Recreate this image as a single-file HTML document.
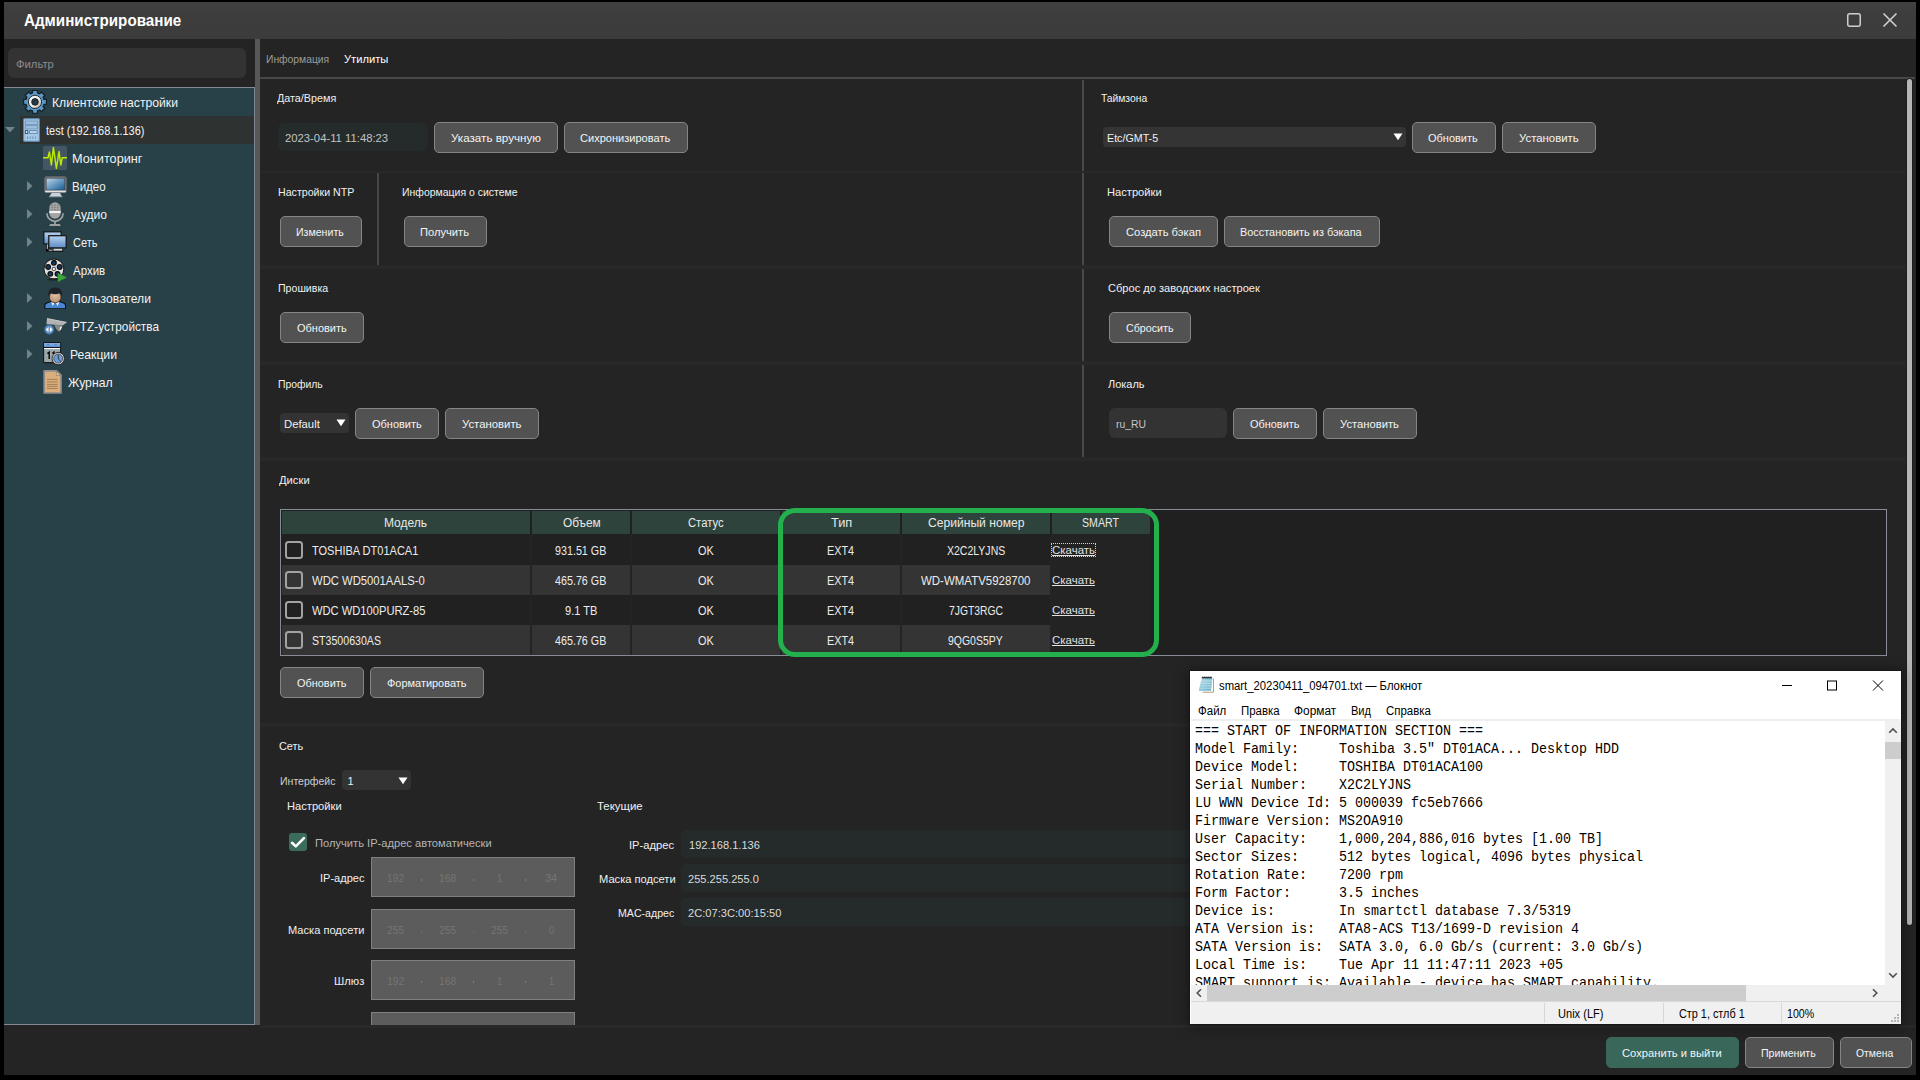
<!DOCTYPE html>
<html lang="ru"><head><meta charset="utf-8"><title>Администрирование</title>
<style>
html,body{margin:0;padding:0;background:#000;}
body{width:1920px;height:1080px;position:relative;overflow:hidden;font-family:"Liberation Sans",sans-serif;}
#app div,#app span,#app svg{position:absolute;}
#app span{white-space:pre;line-height:1;transform-origin:0 0;}
#app{position:absolute;left:0;top:0;width:1920px;height:1080px;overflow:hidden;}
</style></head><body><div id="app">
<div style="left:4px;top:2px;width:1912px;height:1073px;background:#242424;"></div>
<div style="left:4px;top:2px;width:1912px;height:37px;background:linear-gradient(#414141,#3d3d3d 30%,#3c3c3c);"></div>
<svg style="left:1844px;top:10px" width="60" height="20" viewBox="0 0 60 20"><rect x="3.75" y="3.75" width="12.5" height="12.5" rx="2" fill="none" stroke="#cfcfcf" stroke-width="1.5"/><path d="M39.5 3.5 L52.5 16.5 M52.5 3.5 L39.5 16.5" stroke="#cfcfcf" stroke-width="1.6" fill="none"/></svg>
<div style="left:8px;top:48px;width:238px;height:30px;background:#333333;border-radius:6px"></div>
<div style="left:4px;top:87px;width:251px;height:938px;background:#284148;border-top:1px solid #838a93;border-right:1px solid #7e858d;border-bottom:1px solid #838a93;box-sizing:border-box"></div>
<div style="left:20px;top:116px;width:234px;height:28px;background:#2e3230;"></div>
<div style="left:255px;top:39px;width:5px;height:986px;background:#585858;"></div>
<svg style="left:27px;top:181px" width="6" height="10"><path d="M0 0 L5.5 5 L0 10Z" fill="#6f8388"/></svg>
<svg style="left:27px;top:209px" width="6" height="10"><path d="M0 0 L5.5 5 L0 10Z" fill="#6f8388"/></svg>
<svg style="left:27px;top:237px" width="6" height="10"><path d="M0 0 L5.5 5 L0 10Z" fill="#6f8388"/></svg>
<svg style="left:27px;top:293px" width="6" height="10"><path d="M0 0 L5.5 5 L0 10Z" fill="#6f8388"/></svg>
<svg style="left:27px;top:321px" width="6" height="10"><path d="M0 0 L5.5 5 L0 10Z" fill="#6f8388"/></svg>
<svg style="left:27px;top:349px" width="6" height="10"><path d="M0 0 L5.5 5 L0 10Z" fill="#6f8388"/></svg>
<svg style="left:5px;top:127px" width="10" height="6"><path d="M0 0 L10 0 L5 5.5Z" fill="#6f8388"/></svg>
<div style="left:260px;top:77px;width:1655px;height:2px;background:#484848;"></div>
<div style="left:1907px;top:79px;width:5px;height:846px;background:#b6b6b6;border-radius:3px;box-shadow:0 0 0 1px #1e1e1e"></div>
<div style="left:260px;top:171px;width:1646px;height:2px;background:#282828;"></div>
<div style="left:260px;top:265px;width:1646px;height:4px;background:#282828;"></div>
<div style="left:260px;top:361px;width:1646px;height:4px;background:#282828;"></div>
<div style="left:260px;top:457px;width:1646px;height:4px;background:#282828;"></div>
<div style="left:260px;top:723px;width:1646px;height:4px;background:#282828;"></div>
<div style="left:1082px;top:80px;width:2px;height:91px;background:#494949;"></div>
<div style="left:1082px;top:173px;width:2px;height:92px;background:#494949;"></div>
<div style="left:1082px;top:269px;width:2px;height:92px;background:#494949;"></div>
<div style="left:1082px;top:365px;width:2px;height:92px;background:#494949;"></div>
<div style="left:377px;top:173px;width:2px;height:92px;background:#454545;"></div>
<div style="left:278px;top:123px;width:150px;height:28px;background:#252a2a;border-radius:6px"></div>
<div style="left:434px;top:122px;width:124px;height:31px;background:#525252;border:1px solid #858585;border-radius:5px;box-sizing:border-box"></div>
<div style="left:564px;top:122px;width:124px;height:31px;background:#525252;border:1px solid #858585;border-radius:5px;box-sizing:border-box"></div>
<div style="left:1103px;top:127px;width:303px;height:20px;background:#343434;border-radius:4px"></div>
<svg style="left:1393px;top:133px" width="10" height="8"><path d="M0.5 0.5 L9.5 0.5 L5 7.2Z" fill="#ffffff"/></svg>
<div style="left:1412px;top:122px;width:84px;height:31px;background:#525252;border:1px solid #858585;border-radius:5px;box-sizing:border-box"></div>
<div style="left:1502px;top:122px;width:94px;height:31px;background:#525252;border:1px solid #858585;border-radius:5px;box-sizing:border-box"></div>
<div style="left:280px;top:216px;width:82px;height:31px;background:#525252;border:1px solid #858585;border-radius:5px;box-sizing:border-box"></div>
<div style="left:404px;top:216px;width:83px;height:31px;background:#525252;border:1px solid #858585;border-radius:5px;box-sizing:border-box"></div>
<div style="left:1109px;top:216px;width:109px;height:31px;background:#525252;border:1px solid #858585;border-radius:5px;box-sizing:border-box"></div>
<div style="left:1224px;top:216px;width:156px;height:31px;background:#525252;border:1px solid #858585;border-radius:5px;box-sizing:border-box"></div>
<div style="left:280px;top:312px;width:84px;height:31px;background:#525252;border:1px solid #858585;border-radius:5px;box-sizing:border-box"></div>
<div style="left:1109px;top:312px;width:82px;height:31px;background:#525252;border:1px solid #858585;border-radius:5px;box-sizing:border-box"></div>
<div style="left:280px;top:413px;width:69px;height:20px;background:#333333;border-radius:4px"></div>
<svg style="left:336px;top:419px" width="10" height="8"><path d="M0.5 0.5 L9.5 0.5 L5 7.2Z" fill="#ffffff"/></svg>
<div style="left:355px;top:408px;width:84px;height:31px;background:#525252;border:1px solid #858585;border-radius:5px;box-sizing:border-box"></div>
<div style="left:445px;top:408px;width:94px;height:31px;background:#525252;border:1px solid #858585;border-radius:5px;box-sizing:border-box"></div>
<div style="left:1109px;top:408px;width:118px;height:30px;background:#333333;border-radius:6px"></div>
<div style="left:1233px;top:408px;width:84px;height:31px;background:#525252;border:1px solid #858585;border-radius:5px;box-sizing:border-box"></div>
<div style="left:1323px;top:408px;width:94px;height:31px;background:#525252;border:1px solid #858585;border-radius:5px;box-sizing:border-box"></div>
<div style="left:280px;top:509px;width:1607px;height:147px;background:#202020;border:1px solid #878b96;box-sizing:border-box"></div>
<div style="left:282px;top:511px;width:248px;height:23px;background:#2e433c;"></div>
<div style="left:532px;top:511px;width:98px;height:23px;background:#2e433c;"></div>
<div style="left:632px;top:511px;width:148px;height:23px;background:#2e433c;"></div>
<div style="left:782px;top:511px;width:118px;height:23px;background:#2e433c;"></div>
<div style="left:902px;top:511px;width:148px;height:23px;background:#2e433c;"></div>
<div style="left:1052px;top:511px;width:98px;height:23px;background:#2e433c;"></div>
<div style="left:282px;top:534px;width:248px;height:31px;background:#212121;"></div>
<div style="left:532px;top:534px;width:98px;height:31px;background:#212121;"></div>
<div style="left:632px;top:534px;width:148px;height:31px;background:#212121;"></div>
<div style="left:782px;top:534px;width:118px;height:31px;background:#212121;"></div>
<div style="left:902px;top:534px;width:148px;height:31px;background:#212121;"></div>
<div style="left:282px;top:565px;width:248px;height:30px;background:#343434;"></div>
<div style="left:532px;top:565px;width:98px;height:30px;background:#343434;"></div>
<div style="left:632px;top:565px;width:148px;height:30px;background:#343434;"></div>
<div style="left:782px;top:565px;width:118px;height:30px;background:#343434;"></div>
<div style="left:902px;top:565px;width:148px;height:30px;background:#343434;"></div>
<div style="left:282px;top:595px;width:248px;height:30px;background:#212121;"></div>
<div style="left:532px;top:595px;width:98px;height:30px;background:#212121;"></div>
<div style="left:632px;top:595px;width:148px;height:30px;background:#212121;"></div>
<div style="left:782px;top:595px;width:118px;height:30px;background:#212121;"></div>
<div style="left:902px;top:595px;width:148px;height:30px;background:#212121;"></div>
<div style="left:282px;top:625px;width:248px;height:30px;background:#343434;"></div>
<div style="left:532px;top:625px;width:98px;height:30px;background:#343434;"></div>
<div style="left:632px;top:625px;width:148px;height:30px;background:#343434;"></div>
<div style="left:782px;top:625px;width:118px;height:30px;background:#343434;"></div>
<div style="left:902px;top:625px;width:148px;height:30px;background:#343434;"></div>
<div style="left:1052px;top:534px;width:98px;height:121px;background:#232323;"></div>
<div style="left:530px;top:534px;width:2px;height:121px;background:#242424;"></div>
<div style="left:630px;top:534px;width:2px;height:121px;background:#242424;"></div>
<div style="left:780px;top:534px;width:2px;height:121px;background:#242424;"></div>
<div style="left:900px;top:534px;width:2px;height:121px;background:#242424;"></div>
<div style="left:1050px;top:534px;width:2px;height:121px;background:#242424;"></div>
<div style="left:285px;top:541px;width:18px;height:18px;box-sizing:border-box;border:2px solid #a2a2a2;border-radius:3.5px"></div>
<div style="left:285px;top:571px;width:18px;height:18px;box-sizing:border-box;border:2px solid #a2a2a2;border-radius:3.5px"></div>
<div style="left:285px;top:601px;width:18px;height:18px;box-sizing:border-box;border:2px solid #a2a2a2;border-radius:3.5px"></div>
<div style="left:285px;top:631px;width:18px;height:18px;box-sizing:border-box;border:2px solid #a2a2a2;border-radius:3.5px"></div>
<div style="left:1051px;top:543px;width:45px;height:14px;box-sizing:border-box;border:1px dotted #d0d0d0"></div>
<div style="left:778px;top:507.5px;width:381px;height:149px;box-sizing:border-box;border:5px solid #22b14c;border-radius:17px"></div>
<div style="left:280px;top:667px;width:84px;height:31px;background:#525252;border:1px solid #858585;border-radius:5px;box-sizing:border-box"></div>
<div style="left:370px;top:667px;width:114px;height:31px;background:#525252;border:1px solid #858585;border-radius:5px;box-sizing:border-box"></div>
<div style="left:342px;top:770px;width:69px;height:20px;background:#333333;border-radius:4px"></div>
<svg style="left:398px;top:776.5px" width="10" height="8"><path d="M0.5 0.5 L9.5 0.5 L5 7.2Z" fill="#ffffff"/></svg>
<div style="left:289px;top:833px;width:18px;height:18px;background:#3b6b5a;border-radius:3px"></div>
<svg style="left:289px;top:833px" width="18" height="18" viewBox="0 0 18 18"><path d="M3 9.8 L6.8 13.4 L14.9 5.1" fill="none" stroke="#ffffff" stroke-width="2.6" stroke-linecap="round" stroke-linejoin="round"/></svg>
<div style="left:371px;top:857px;width:204px;height:40px;background:#5c5c5c;border:1px solid #808080;box-sizing:border-box"></div>
<div style="left:420.5px;top:878.9px;width:1.6px;height:1.8px;background:#7c7c7c;"></div>
<div style="left:472.5px;top:878.9px;width:1.6px;height:1.8px;background:#7c7c7c;"></div>
<div style="left:524.5px;top:878.9px;width:1.6px;height:1.8px;background:#7c7c7c;"></div>
<div style="left:371px;top:909px;width:204px;height:40px;background:#5c5c5c;border:1px solid #808080;box-sizing:border-box"></div>
<div style="left:420.5px;top:930.65px;width:1.6px;height:1.8px;background:#7c7c7c;"></div>
<div style="left:472.5px;top:930.65px;width:1.6px;height:1.8px;background:#7c7c7c;"></div>
<div style="left:524.5px;top:930.65px;width:1.6px;height:1.8px;background:#7c7c7c;"></div>
<div style="left:371px;top:960px;width:204px;height:40px;background:#5c5c5c;border:1px solid #808080;box-sizing:border-box"></div>
<div style="left:420.5px;top:981.4px;width:1.6px;height:1.8px;background:#7c7c7c;"></div>
<div style="left:472.5px;top:981.4px;width:1.6px;height:1.8px;background:#7c7c7c;"></div>
<div style="left:524.5px;top:981.4px;width:1.6px;height:1.8px;background:#7c7c7c;"></div>
<div style="left:371px;top:1012px;width:204px;height:13px;background:#5c5c5c;border:1px solid #808080;border-bottom:none;box-sizing:border-box"></div>
<div style="left:681px;top:830px;width:520px;height:28px;background:#252a2a;border-radius:5px 0 0 5px"></div>
<div style="left:681px;top:864px;width:520px;height:28px;background:#252a2a;border-radius:5px 0 0 5px"></div>
<div style="left:681px;top:898px;width:520px;height:28px;background:#252a2a;border-radius:5px 0 0 5px"></div>
<div style="left:4px;top:1025px;width:1912px;height:50px;background:#242424;"></div>
<div style="left:260px;top:1025px;width:1656px;height:3px;background:#292929;"></div>
<div style="left:1606px;top:1037px;width:133px;height:31px;background:#39685a;border:1px solid #39685a;border-radius:5px;box-sizing:border-box"></div>
<div style="left:1745px;top:1037px;width:89px;height:31px;background:#525252;border:1px solid #858585;border-radius:5px;box-sizing:border-box"></div>
<div style="left:1840px;top:1037px;width:72px;height:31px;background:#525252;border:1px solid #858585;border-radius:5px;box-sizing:border-box"></div>
<div style="left:1190px;top:671px;width:711px;height:353px;background:#ffffff;box-shadow:0 0 0 1px rgba(0,0,0,0.2),0 1px 12px 2px rgba(0,0,0,0.36)"></div>
<svg style="left:1198px;top:676px" width="17" height="18" viewBox="0 0 17 18"><defs><linearGradient id="npg" x1="0" y1="0" x2="1" y2="1"><stop offset="0" stop-color="#b4dde8"/><stop offset="1" stop-color="#64aecb"/></linearGradient></defs><path d="M4.4 2.4 H15.3 V16 H4.6Z" fill="#ffffff"/><path d="M15.5 2.6 V16.2 H4.6" fill="none" stroke="#a8946a" stroke-width="0.9"/><path d="M3.7 2 H14.5 L13 14.8 H0.8Z" fill="url(#npg)"/><path d="M3.2 5 H14 M2.9 7.4 H13.7 M2.5 9.8 H13.4 M2.2 12.2 H13.1" stroke="#c6e6ef" stroke-width="0.8"/><path d="M3.9 2.2 L4.9 1 L5.9 2.2 L6.9 1 L7.9 2.2 L8.9 1 L9.9 2.2 L10.9 1 L11.9 2.2 L12.9 1 L13.9 2.2" fill="none" stroke="#2c3438" stroke-width="1.1"/></svg>
<svg style="left:1775px;top:676px" width="120" height="20" viewBox="0 0 120 20"><path d="M7 9.5 H17" stroke="#000" stroke-width="1"/><rect x="52.5" y="5" width="9" height="9" fill="none" stroke="#000" stroke-width="1"/><path d="M98 4.5 L108 14.5 M108 4.5 L98 14.5" stroke="#000" stroke-width="1"/></svg>
<div style="left:1191px;top:719px;width:709px;height:2px;background:#eeeeee;"></div>
<div style="left:1191px;top:721px;width:694px;height:264px;overflow:hidden;background:#fff"><div style="left:-1191px;top:-721px;width:1920px;height:1080px"><span style="left:1194.6px;top:724.27px;font-size:14px;font-family:'Liberation Mono',monospace;color:#000;transform:scaleX(0.9524)">=== START OF INFORMATION SECTION ===</span><span style="left:1194.6px;top:742.27px;font-size:14px;font-family:'Liberation Mono',monospace;color:#000;transform:scaleX(0.9524)">Model Family:     Toshiba 3.5&quot; DT01ACA... Desktop HDD</span><span style="left:1194.6px;top:760.27px;font-size:14px;font-family:'Liberation Mono',monospace;color:#000;transform:scaleX(0.9524)">Device Model:     TOSHIBA DT01ACA100</span><span style="left:1194.6px;top:778.27px;font-size:14px;font-family:'Liberation Mono',monospace;color:#000;transform:scaleX(0.9524)">Serial Number:    X2C2LYJNS</span><span style="left:1194.6px;top:796.27px;font-size:14px;font-family:'Liberation Mono',monospace;color:#000;transform:scaleX(0.9524)">LU WWN Device Id: 5 000039 fc5eb7666</span><span style="left:1194.6px;top:814.27px;font-size:14px;font-family:'Liberation Mono',monospace;color:#000;transform:scaleX(0.9524)">Firmware Version: MS2OA910</span><span style="left:1194.6px;top:832.27px;font-size:14px;font-family:'Liberation Mono',monospace;color:#000;transform:scaleX(0.9524)">User Capacity:    1,000,204,886,016 bytes [1.00 TB]</span><span style="left:1194.6px;top:850.27px;font-size:14px;font-family:'Liberation Mono',monospace;color:#000;transform:scaleX(0.9524)">Sector Sizes:     512 bytes logical, 4096 bytes physical</span><span style="left:1194.6px;top:868.27px;font-size:14px;font-family:'Liberation Mono',monospace;color:#000;transform:scaleX(0.9524)">Rotation Rate:    7200 rpm</span><span style="left:1194.6px;top:886.27px;font-size:14px;font-family:'Liberation Mono',monospace;color:#000;transform:scaleX(0.9524)">Form Factor:      3.5 inches</span><span style="left:1194.6px;top:904.27px;font-size:14px;font-family:'Liberation Mono',monospace;color:#000;transform:scaleX(0.9524)">Device is:        In smartctl database 7.3/5319</span><span style="left:1194.6px;top:922.27px;font-size:14px;font-family:'Liberation Mono',monospace;color:#000;transform:scaleX(0.9524)">ATA Version is:   ATA8-ACS T13/1699-D revision 4</span><span style="left:1194.6px;top:940.27px;font-size:14px;font-family:'Liberation Mono',monospace;color:#000;transform:scaleX(0.9524)">SATA Version is:  SATA 3.0, 6.0 Gb/s (current: 3.0 Gb/s)</span><span style="left:1194.6px;top:958.27px;font-size:14px;font-family:'Liberation Mono',monospace;color:#000;transform:scaleX(0.9524)">Local Time is:    Tue Apr 11 11:47:11 2023 +05</span><span style="left:1194.6px;top:976.27px;font-size:14px;font-family:'Liberation Mono',monospace;color:#000;transform:scaleX(0.9524)">SMART support is: Available - device has SMART capability.</span></div></div>
<div style="left:1885px;top:721px;width:16px;height:264px;background:#f0f0f0;"></div>
<div style="left:1885px;top:742px;width:16px;height:17px;background:#cdcdcd;"></div>
<svg style="left:1885px;top:721px" width="16" height="264" viewBox="0 0 16 264"><path d="M4.2 11.8 L8 8 L11.8 11.8" fill="none" stroke="#505050" stroke-width="1.6"/><path d="M4.2 252.2 L8 256 L11.8 252.2" fill="none" stroke="#505050" stroke-width="1.6"/></svg>
<div style="left:1191px;top:985px;width:710px;height:16px;background:#f0f0f0;"></div>
<div style="left:1207px;top:985px;width:539px;height:16px;background:#cdcdcd;"></div>
<svg style="left:1191px;top:985px" width="694" height="16" viewBox="0 0 694 16"><path d="M10 4.2 L6.2 8 L10 11.8" fill="none" stroke="#505050" stroke-width="1.6"/><path d="M682 4.2 L685.8 8 L682 11.8" fill="none" stroke="#505050" stroke-width="1.6"/></svg>
<div style="left:1191px;top:1001px;width:710px;height:23px;background:#f0f0f0;border-top:1px solid #d9d9d9;box-sizing:border-box"></div>
<div style="left:1544px;top:1003px;width:1px;height:20px;background:#d7d7d7;"></div>
<div style="left:1663px;top:1003px;width:1px;height:20px;background:#d7d7d7;"></div>
<div style="left:1781px;top:1003px;width:1px;height:20px;background:#d7d7d7;"></div>
<svg style="left:1890px;top:1013px" width="10" height="10" viewBox="0 0 10 10"><g fill="#b4b4b4"><rect x="7" y="1" width="2" height="2"/><rect x="4" y="4" width="2" height="2"/><rect x="7" y="4" width="2" height="2"/><rect x="1" y="7" width="2" height="2"/><rect x="4" y="7" width="2" height="2"/><rect x="7" y="7" width="2" height="2"/></g></svg>
<svg style="left:23px;top:90px" width="24" height="24" viewBox="0 0 24 24"><defs><linearGradient id="gg" x1="0" y1="0" x2="1" y2="1"><stop offset="0" stop-color="#ffffff"/><stop offset="0.6" stop-color="#e8e8e8"/><stop offset="1" stop-color="#9a9a9a"/></linearGradient></defs><path d="M9.52 2.94 L9.50 0.47 L14.50 0.47 L14.48 2.94 L16.58 3.81 L18.32 2.05 L21.85 5.58 L20.09 7.32 L20.96 9.42 L23.43 9.40 L23.43 14.40 L20.96 14.38 L20.09 16.48 L21.85 18.22 L18.32 21.75 L16.58 19.99 L14.48 20.86 L14.50 23.33 L9.50 23.33 L9.52 20.86 L7.42 19.99 L5.68 21.75 L2.15 18.22 L3.91 16.48 L3.04 14.38 L0.57 14.40 L0.57 9.40 L3.04 9.42 L3.91 7.32 L2.15 5.58 L5.68 2.05 L7.42 3.81Z" fill="#5d99c8" stroke="#15222a" stroke-width="1.3" stroke-linejoin="round"/><circle cx="12" cy="11.9" r="6.6" fill="url(#gg)" stroke="#1b1b1b" stroke-width="0.9"/><circle cx="12" cy="11.9" r="3.3" fill="#253a42" stroke="#1b1b1b" stroke-width="0.9"/></svg>
<svg style="left:23px;top:118px" width="17" height="24" viewBox="0 0 17 24"><rect x="0.6" y="0.6" width="15.8" height="22.8" rx="1" fill="#a6c9e8" stroke="#5a86ad" stroke-width="1.2"/><rect x="2.6" y="3" width="11.8" height="3.6" fill="#9dbfdf" stroke="#6f93b5" stroke-width="0.8"/><rect x="2.6" y="7.4" width="11.8" height="3.6" fill="#9dbfdf" stroke="#6f93b5" stroke-width="0.8"/><rect x="6.6" y="12.6" width="7.6" height="3" fill="#b5d2ec" stroke="#5f86aa" stroke-width="0.8"/><rect x="2.4" y="12.6" width="2.4" height="3" fill="#dfeefa" stroke="#2f4f70" stroke-width="0.9"/><path d="M4.5 18.4 V21 M7.2 18.4 V21 M9.9 18.4 V21 M12.6 18.4 V21" stroke="#6f93b5" stroke-width="1"/></svg>
<svg style="left:43px;top:146px" width="24" height="24" viewBox="0 0 24 24"><rect x="0" y="0" width="24" height="24" rx="1.5" fill="#445664"/><path d="M0 11.8 H5 L6.4 6 L8.4 19 L10.4 1.5 L13.4 22.5 L16 5.5 L17.8 19 L19.2 11.8 H24" fill="none" stroke="#b9ea00" stroke-width="1.5" stroke-linejoin="round"/></svg>
<svg style="left:44px;top:175.6px" width="23" height="22" viewBox="0 0 23 22"><defs><linearGradient id="mg" x1="0" y1="0" x2="1" y2="1"><stop offset="0" stop-color="#c3d6e6"/><stop offset="0.45" stop-color="#6fa0c6"/><stop offset="1" stop-color="#185a92"/></linearGradient></defs><rect x="0.7" y="0.7" width="21.6" height="15.8" rx="1.6" fill="#757575" stroke="#666666" stroke-width="1"/><rect x="2.2" y="2.2" width="18.6" height="11.8" fill="url(#mg)" stroke="#33414d" stroke-width="0.5"/><rect x="1.2" y="14.6" width="20.6" height="1.7" fill="#e4e4e4"/><path d="M7.6 17 H16 L18 20.6 H5.4Z" fill="#c9d2da"/><path d="M5 20.2 H18.4 V21.2 H5Z" fill="#9aa3aa"/></svg>
<svg style="left:46px;top:201.8px" width="18" height="24.4" viewBox="0 0 18 24.4"><path d="M0.9 11.2 A8.1 8.1 0 0 0 17.1 11.2" fill="none" stroke="#a0a0a0" stroke-width="1.7"/><rect x="3.3" y="0.3" width="11.4" height="16.4" rx="5.6" fill="#a3a3a3"/><rect x="3.3" y="9" width="11.4" height="2.1" fill="#f4f4f4"/><g fill="#7f7f7f"><rect x="5.4" y="2.6" width="1.5" height="1.2"/><rect x="8.2" y="2.6" width="1.5" height="1.2"/><rect x="11" y="2.6" width="1.5" height="1.2"/><rect x="5.4" y="4.9" width="1.5" height="1.2"/><rect x="8.2" y="4.9" width="1.5" height="1.2"/><rect x="11" y="4.9" width="1.5" height="1.2"/><rect x="5.4" y="7.1" width="1.5" height="1.2"/><rect x="8.2" y="7.1" width="1.5" height="1.2"/><rect x="11" y="7.1" width="1.5" height="1.2"/></g><rect x="8.1" y="19.2" width="1.8" height="3.2" fill="#a0a0a0"/><path d="M4.2 22 H13.8 L14.8 24 H3.2Z" fill="#a0a0a0"/></svg>
<svg style="left:43px;top:231px" width="24" height="22" viewBox="0 0 24 22"><defs><linearGradient id="ng" x1="0" y1="0" x2="0" y2="1"><stop offset="0" stop-color="#b9d3f2"/><stop offset="1" stop-color="#5a8bc6"/></linearGradient></defs><rect x="0.8" y="0.8" width="17.4" height="12.2" fill="url(#ng)" stroke="#1a1a1a" stroke-width="1.3"/><path d="M4.4 13.4 V19.2 H9.6" fill="none" stroke="#151515" stroke-width="2.4"/><path d="M4.4 13.4 V19.2 H9.6" fill="none" stroke="#d8d8d8" stroke-width="0.9"/><circle cx="4.2" cy="19.4" r="1.6" fill="#111"/><rect x="5.8" y="4.7" width="17.4" height="12.2" fill="url(#ng)" stroke="#1a1a1a" stroke-width="1.3"/><rect x="10.6" y="17.8" width="8.4" height="2" fill="#d6d6d6"/><path d="M9 20.3 H20.5" stroke="#151515" stroke-width="1"/></svg>
<svg style="left:43px;top:257.9px" width="24" height="24.4" viewBox="0 0 24 24.4"><ellipse cx="10.9" cy="21.6" rx="7" ry="0.8" fill="#1a2226"/><circle cx="10.9" cy="10.9" r="10" fill="#dedede" stroke="#202020" stroke-width="1.1"/><circle cx="10.90" cy="4.80" r="2.3" fill="#173a63" stroke="#101010" stroke-width="1.3"/><circle cx="16.70" cy="9.01" r="2.3" fill="#173a63" stroke="#101010" stroke-width="1.3"/><circle cx="14.49" cy="15.84" r="2.3" fill="#173a63" stroke="#101010" stroke-width="1.3"/><circle cx="7.31" cy="15.84" r="2.3" fill="#173a63" stroke="#101010" stroke-width="1.3"/><circle cx="5.10" cy="9.01" r="2.3" fill="#173a63" stroke="#101010" stroke-width="1.3"/><rect x="9.4" y="9.4" width="3" height="3" rx="0.8" fill="#fff" stroke="#222" stroke-width="0.9"/><path d="M15 15.2 L23.6 19.5 L15 23.8Z" fill="#3aa73a" stroke="#2f962f" stroke-width="0.5"/></svg>
<svg style="left:43.7px;top:286.8px" width="22.4" height="22.6" viewBox="0 0 22.4 22.6"><defs><radialGradient id="ug" cx="0.5" cy="0.35" r="0.7"><stop offset="0" stop-color="#e2c2a4"/><stop offset="1" stop-color="#b48a68"/></radialGradient></defs><path d="M0.8 21.8 V18.4 Q0.8 16.2 4 15.5 L8 14.2 H14.4 L18.4 15.5 Q21.6 16.2 21.6 18.4 V21.8Z" fill="#4a86d2" stroke="#0c0c0c" stroke-width="1.1" stroke-linejoin="round"/><path d="M7.2 14.8 L8.8 19 L10.6 15.4Z M15.2 14.8 L13.6 19 L11.8 15.4Z" fill="#ffffff"/><circle cx="11.2" cy="10" r="5.9" fill="url(#ug)" stroke="#2a2420" stroke-width="0.7"/><path d="M4.4 9.6 Q3.2 0.6 11.2 0.5 Q19.2 0.6 18 9.6 Q17.4 7 15.6 6.3 Q11.2 8 6.8 6.3 Q5 7 4.4 9.6Z" fill="#1d2128"/></svg>
<svg style="left:44.1px;top:317.8px" width="23.4" height="17" viewBox="0 0 23.4 17"><path d="M3.0 0.6 L22.7 4.4 L19.1 7.3 L2.5 6.2Z" fill="#b2b2b2"/><path d="M3.0 0.6 L22.7 4.4" stroke="#d4d4d4" stroke-width="0.9"/><path d="M10.2 6.8 L18.8 7.6 L15.9 13.5 L14.2 13.3 L11.9 10.6Z" fill="#8a8a8a"/><path d="M16.3 8.8 L18 8.6 L16.7 11.9 L15.4 11.7Z" fill="#f2f2f2"/><circle cx="5.2" cy="11.6" r="4.6" fill="#5c90c8" stroke="#3d6c9e" stroke-width="0.7"/><path d="M4.5 9 L4.5 14.2 L1.8 11.6Z M5.9 9 L5.9 14.2 L8.6 11.6Z" fill="#ffffff"/></svg>
<svg style="left:43px;top:342px" width="22" height="23.4" viewBox="0 0 22 23.4"><defs><linearGradient id="cg" x1="0" y1="0" x2="0" y2="1"><stop offset="0" stop-color="#8ab4e6"/><stop offset="1" stop-color="#5b8fd0"/></linearGradient></defs><rect x="0.6" y="0.6" width="17" height="20" rx="0.8" fill="#9ba7a8" stroke="#15191b" stroke-width="1.1"/><rect x="1.1" y="1.1" width="16" height="4" fill="url(#cg)"/><path d="M4 2.6 H6.4 M11.4 2.6 H13.8" stroke="#4d7fc0" stroke-width="0.9"/><rect x="0.6" y="5" width="17" height="1" fill="#15191b"/><rect x="1.1" y="6" width="16" height="1.1" fill="#fafafa"/><path d="M4.4 11.6 L6.2 10.2 V17" fill="none" stroke="#0a0a0a" stroke-width="1.5"/><path d="M9.4 11.4 L10.8 10.2 V12" fill="none" stroke="#0a0a0a" stroke-width="1.4"/><circle cx="15.2" cy="16.6" r="6.2" fill="#d9d9d9" stroke="#1c1c1c" stroke-width="0.9"/><circle cx="15.2" cy="16.6" r="4.5" fill="#6c9cd6" stroke="#2c2c2c" stroke-width="0.7"/><path d="M15.3 13 V17 L17.8 19.4" fill="none" stroke="#20303c" stroke-width="0.9"/></svg>
<svg style="left:43px;top:370px" width="19" height="24" viewBox="0 0 19 24"><path d="M1.2 0.9 H13.6 L18 5.2 V23 H1.2Z" fill="#dcae7b" stroke="#8e8e8e" stroke-width="1.7" stroke-linejoin="round"/><path d="M13.4 1.4 V5.4 H17.6Z" fill="#f0d2ac" stroke="#7a6a55" stroke-width="0.6"/><path d="M4 9.4 H14.6 M4 11.9 H14.6 M4 14.4 H14.6 M4 16.4 H14.6 M4 18.5 H14.6" stroke="#9b7a52" stroke-width="0.9"/></svg>
<span style="left:24.00px;top:13.00px;font-size:16px;color:#ffffff;font-weight:700;transform:scaleX(0.9484);">Администрирование</span>
<span style="left:15.50px;top:59.00px;font-size:11px;color:#8c8c8c;transform:scaleX(1.0248);">Фильтр</span>
<span style="left:52.31px;top:96.00px;font-size:13px;color:#f2f2f2;transform:scaleX(0.9366);">Клиентские настройки</span>
<span style="left:46.25px;top:124.00px;font-size:13px;color:#f2f2f2;transform:scaleX(0.8468);">test (192.168.1.136)</span>
<span style="left:72.27px;top:152.00px;font-size:13px;color:#f2f2f2;transform:scaleX(0.9775);">Мониторинг</span>
<span style="left:72.37px;top:180.00px;font-size:13px;color:#f2f2f2;transform:scaleX(0.8844);">Видео</span>
<span style="left:73.25px;top:208.00px;font-size:13px;color:#f2f2f2;transform:scaleX(0.9262);">Аудио</span>
<span style="left:73.25px;top:236.00px;font-size:13px;color:#f2f2f2;transform:scaleX(0.8493);">Сеть</span>
<span style="left:73.25px;top:264.00px;font-size:13px;color:#f2f2f2;transform:scaleX(0.8832);">Архив</span>
<span style="left:72.32px;top:292.00px;font-size:13px;color:#f2f2f2;transform:scaleX(0.9302);">Пользователи</span>
<span style="left:72.34px;top:320.00px;font-size:13px;color:#f2f2f2;transform:scaleX(0.9072);">PTZ-устройства</span>
<span style="left:70.32px;top:348.00px;font-size:13px;color:#f2f2f2;transform:scaleX(0.9345);">Реакции</span>
<span style="left:68.00px;top:376.00px;font-size:13px;color:#f2f2f2;transform:scaleX(0.9392);">Журнал</span>
<span style="left:266.25px;top:54.00px;font-size:11px;color:#9c9c9c;transform:scaleX(0.9385);">Информация</span>
<span style="left:343.75px;top:54.00px;font-size:11px;color:#ffffff;transform:scaleX(1.0166);">Утилиты</span>
<span style="left:277.00px;top:93.00px;font-size:11px;color:#f0f0f0;transform:scaleX(0.9785);">Дата/Время</span>
<span style="left:285.00px;top:133.00px;font-size:11px;color:#c4c4c4;transform:scaleX(1.0260);">2023-04-11 11:48:23</span>
<span style="left:450.75px;top:133.00px;font-size:11px;color:#f4f4f4;transform:scaleX(1.0568);">Указать вручную</span>
<span style="left:580.00px;top:133.00px;font-size:11px;color:#f4f4f4;transform:scaleX(1.0044);">Сихронизировать</span>
<span style="left:1101.25px;top:93.00px;font-size:11px;color:#f0f0f0;transform:scaleX(0.9393);">Таймзона</span>
<span style="left:1107.00px;top:133.00px;font-size:11px;color:#f0f0f0;transform:scaleX(0.9725);">Etc/GMT-5</span>
<span style="left:1428.25px;top:133.00px;font-size:11px;color:#f4f4f4;transform:scaleX(0.9985);">Обновить</span>
<span style="left:1518.50px;top:133.00px;font-size:11px;color:#f4f4f4;transform:scaleX(1.0344);">Установить</span>
<span style="left:278.25px;top:187.00px;font-size:11px;color:#f0f0f0;transform:scaleX(0.9662);">Настройки NTP</span>
<span style="left:296.25px;top:227.00px;font-size:11px;color:#f4f4f4;transform:scaleX(0.9622);">Изменить</span>
<span style="left:402.00px;top:187.00px;font-size:11px;color:#f0f0f0;transform:scaleX(0.9520);">Информация о системе</span>
<span style="left:420.00px;top:227.00px;font-size:11px;color:#f4f4f4;transform:scaleX(1.0131);">Получить</span>
<span style="left:1107.00px;top:187.00px;font-size:11px;color:#f0f0f0;transform:scaleX(1.0132);">Настройки</span>
<span style="left:1125.50px;top:227.00px;font-size:11px;color:#f4f4f4;transform:scaleX(1.0160);">Создать бэкап</span>
<span style="left:1240.00px;top:227.00px;font-size:11px;color:#f4f4f4;transform:scaleX(0.9907);">Восстановить из бэкапа</span>
<span style="left:278.25px;top:283.00px;font-size:11px;color:#f0f0f0;transform:scaleX(0.9621);">Прошивка</span>
<span style="left:296.50px;top:323.00px;font-size:11px;color:#f4f4f4;transform:scaleX(0.9985);">Обновить</span>
<span style="left:1107.50px;top:283.00px;font-size:11px;color:#f0f0f0;transform:scaleX(1.0073);">Сброс до заводских настроек</span>
<span style="left:1125.50px;top:323.00px;font-size:11px;color:#f4f4f4;transform:scaleX(0.9713);">Сбросить</span>
<span style="left:278.25px;top:379.00px;font-size:11px;color:#f0f0f0;transform:scaleX(0.9423);">Профиль</span>
<span style="left:284.25px;top:419.00px;font-size:11px;color:#f0f0f0;transform:scaleX(1.0274);">Default</span>
<span style="left:371.50px;top:419.00px;font-size:11px;color:#f4f4f4;transform:scaleX(0.9985);">Обновить</span>
<span style="left:461.75px;top:419.00px;font-size:11px;color:#f4f4f4;transform:scaleX(1.0301);">Установить</span>
<span style="left:1107.50px;top:379.00px;font-size:11px;color:#f0f0f0;transform:scaleX(0.9952);">Локаль</span>
<span style="left:1116.25px;top:419.00px;font-size:11px;color:#c6c6c6;transform:scaleX(0.9421);">ru_RU</span>
<span style="left:1249.50px;top:419.00px;font-size:11px;color:#f4f4f4;transform:scaleX(0.9935);">Обновить</span>
<span style="left:1340.00px;top:419.00px;font-size:11px;color:#f4f4f4;transform:scaleX(1.0215);">Установить</span>
<span style="left:279.00px;top:475.00px;font-size:11px;color:#f0f0f0;transform:scaleX(1.0198);">Диски</span>
<span style="left:384.25px;top:517.00px;font-size:12px;color:#e8e8e8;transform:scaleX(0.9984);">Модель</span>
<span style="left:562.50px;top:517.00px;font-size:12px;color:#e8e8e8;transform:scaleX(0.9873);">Объем</span>
<span style="left:688.25px;top:517.00px;font-size:12px;color:#e8e8e8;transform:scaleX(0.9358);">Статус</span>
<span style="left:830.50px;top:517.00px;font-size:12px;color:#e8e8e8;transform:scaleX(1.0638);">Тип</span>
<span style="left:927.50px;top:517.00px;font-size:12px;color:#e8e8e8;transform:scaleX(1.0085);">Серийный номер</span>
<span style="left:1082.00px;top:517.00px;font-size:12px;color:#e8e8e8;transform:scaleX(0.8833);">SMART</span>
<span style="left:312.00px;top:544.00px;font-size:13px;color:#ececec;transform:scaleX(0.8475);">TOSHIBA DT01ACA1</span>
<span style="left:555.00px;top:544.00px;font-size:13px;color:#ececec;transform:scaleX(0.8254);">931.51 GB</span>
<span style="left:698.25px;top:544.00px;font-size:13px;color:#ececec;transform:scaleX(0.8372);">OK</span>
<span style="left:827.42px;top:544.00px;font-size:13px;color:#ececec;transform:scaleX(0.8311);">EXT4</span>
<span style="left:947.00px;top:544.00px;font-size:13px;color:#ececec;transform:scaleX(0.8086);">X2C2LYJNS</span>
<span style="left:1051.75px;top:545.00px;font-size:11px;color:#e0e0e0;transform:scaleX(1.0417);text-decoration:underline;">Скачать</span>
<span style="left:312.00px;top:574.00px;font-size:13px;color:#ececec;transform:scaleX(0.8667);">WDC WD5001AALS-0</span>
<span style="left:555.00px;top:574.00px;font-size:13px;color:#ececec;transform:scaleX(0.8254);">465.76 GB</span>
<span style="left:698.25px;top:574.00px;font-size:13px;color:#ececec;transform:scaleX(0.8372);">OK</span>
<span style="left:827.42px;top:574.00px;font-size:13px;color:#ececec;transform:scaleX(0.8311);">EXT4</span>
<span style="left:921.00px;top:574.00px;font-size:13px;color:#ececec;transform:scaleX(0.8826);">WD-WMATV5928700</span>
<span style="left:1051.75px;top:575.00px;font-size:11px;color:#e0e0e0;transform:scaleX(1.0417);text-decoration:underline;">Скачать</span>
<span style="left:312.00px;top:604.00px;font-size:13px;color:#ececec;transform:scaleX(0.8583);">WDC WD100PURZ-85</span>
<span style="left:565.00px;top:604.00px;font-size:13px;color:#ececec;transform:scaleX(0.8505);">9.1 TB</span>
<span style="left:698.25px;top:604.00px;font-size:13px;color:#ececec;transform:scaleX(0.8372);">OK</span>
<span style="left:827.42px;top:604.00px;font-size:13px;color:#ececec;transform:scaleX(0.8311);">EXT4</span>
<span style="left:949.25px;top:604.00px;font-size:13px;color:#ececec;transform:scaleX(0.7961);">7JGT3RGC</span>
<span style="left:1051.75px;top:605.00px;font-size:11px;color:#e0e0e0;transform:scaleX(1.0417);text-decoration:underline;">Скачать</span>
<span style="left:312.00px;top:634.00px;font-size:13px;color:#ececec;transform:scaleX(0.8157);">ST3500630AS</span>
<span style="left:555.00px;top:634.00px;font-size:13px;color:#ececec;transform:scaleX(0.8254);">465.76 GB</span>
<span style="left:698.25px;top:634.00px;font-size:13px;color:#ececec;transform:scaleX(0.8372);">OK</span>
<span style="left:827.42px;top:634.00px;font-size:13px;color:#ececec;transform:scaleX(0.8311);">EXT4</span>
<span style="left:948.00px;top:634.00px;font-size:13px;color:#ececec;transform:scaleX(0.8058);">9QG0S5PY</span>
<span style="left:1051.75px;top:635.00px;font-size:11px;color:#e0e0e0;transform:scaleX(1.0417);text-decoration:underline;">Скачать</span>
<span style="left:296.50px;top:678.00px;font-size:11px;color:#f4f4f4;transform:scaleX(0.9935);">Обновить</span>
<span style="left:386.50px;top:678.00px;font-size:11px;color:#f4f4f4;transform:scaleX(0.9958);">Форматировать</span>
<span style="left:278.75px;top:741.00px;font-size:11px;color:#f0f0f0;transform:scaleX(0.9905);">Сеть</span>
<span style="left:279.50px;top:776.00px;font-size:11px;color:#cfcfcf;transform:scaleX(0.9582);">Интерфейс</span>
<span style="left:347.50px;top:776.00px;font-size:11px;color:#f0f0f0;transform:scaleX(1.0000);">1</span>
<span style="left:287.00px;top:801.00px;font-size:11px;color:#f0f0f0;transform:scaleX(1.0132);">Настройки</span>
<span style="left:597.00px;top:801.00px;font-size:11px;color:#f0f0f0;transform:scaleX(1.0376);">Текущие</span>
<span style="left:315.00px;top:838.00px;font-size:11px;color:#b4b4b4;transform:scaleX(1.0125);">Получить IP-адрес автоматически</span>
<span style="left:386.50px;top:873.00px;font-size:11px;color:#757575;transform:scaleX(0.9323);">192</span>
<span style="left:438.50px;top:873.00px;font-size:11px;color:#757575;transform:scaleX(0.9323);">168</span>
<span style="left:496.50px;top:873.00px;font-size:11px;color:#757575;transform:scaleX(0.8333);">1</span>
<span style="left:545.00px;top:873.00px;font-size:11px;color:#757575;transform:scaleX(0.9903);">34</span>
<span style="left:386.50px;top:925.00px;font-size:11px;color:#757575;transform:scaleX(0.9323);">255</span>
<span style="left:438.50px;top:925.00px;font-size:11px;color:#757575;transform:scaleX(0.9323);">255</span>
<span style="left:490.50px;top:925.00px;font-size:11px;color:#757575;transform:scaleX(0.9323);">255</span>
<span style="left:548.50px;top:925.00px;font-size:11px;color:#757575;transform:scaleX(0.8333);">0</span>
<span style="left:386.50px;top:976.00px;font-size:11px;color:#757575;transform:scaleX(0.9323);">192</span>
<span style="left:438.50px;top:976.00px;font-size:11px;color:#757575;transform:scaleX(0.9323);">168</span>
<span style="left:496.50px;top:976.00px;font-size:11px;color:#757575;transform:scaleX(0.8333);">1</span>
<span style="left:548.50px;top:976.00px;font-size:11px;color:#757575;transform:scaleX(0.8333);">1</span>
<span style="left:319.50px;top:873.00px;font-size:11px;color:#f0f0f0;transform:scaleX(1.0039);">IP-адрес</span>
<span style="left:288.25px;top:925.00px;font-size:11px;color:#f0f0f0;transform:scaleX(1.0076);">Маска подсети</span>
<span style="left:334.25px;top:976.00px;font-size:11px;color:#f0f0f0;transform:scaleX(1.0168);">Шлюз</span>
<span style="left:629.48px;top:840.00px;font-size:11px;color:#f0f0f0;transform:scaleX(1.0153);">IP-адрес</span>
<span style="left:598.50px;top:874.00px;font-size:11px;color:#f0f0f0;transform:scaleX(1.0109);">Маска подсети</span>
<span style="left:618.25px;top:908.00px;font-size:11px;color:#f0f0f0;transform:scaleX(0.9639);">MAC-адрес</span>
<span style="left:688.75px;top:840.00px;font-size:11px;color:#dcdcdc;transform:scaleX(1.0074);">192.168.1.136</span>
<span style="left:688.25px;top:874.00px;font-size:11px;color:#dcdcdc;transform:scaleX(1.0074);">255.255.255.0</span>
<span style="left:688.25px;top:908.00px;font-size:11px;color:#dcdcdc;transform:scaleX(1.0111);">2C:07:3C:00:15:50</span>
<span style="left:1622.40px;top:1048.00px;font-size:11px;color:#f4f4f4;transform:scaleX(1.0179);">Сохранить и выйти</span>
<span style="left:1761.00px;top:1048.00px;font-size:11px;color:#f4f4f4;transform:scaleX(0.9631);">Применить</span>
<span style="left:1856.30px;top:1048.00px;font-size:11px;color:#f4f4f4;transform:scaleX(0.9418);">Отмена</span>
<span style="left:1219.25px;top:680.00px;font-size:12px;color:#000000;transform:scaleX(0.9416);">smart_20230411_094701.txt — Блокнот</span>
<span style="left:1197.50px;top:705.00px;font-size:12px;color:#000000;transform:scaleX(0.9576);">Файл</span>
<span style="left:1240.50px;top:705.00px;font-size:12px;color:#000000;transform:scaleX(0.9544);">Правка</span>
<span style="left:1294.25px;top:705.00px;font-size:12px;color:#000000;transform:scaleX(0.9912);">Формат</span>
<span style="left:1351.25px;top:705.00px;font-size:12px;color:#000000;transform:scaleX(0.9214);">Вид</span>
<span style="left:1385.50px;top:705.00px;font-size:12px;color:#000000;transform:scaleX(0.9546);">Справка</span>
<span style="left:1558.25px;top:1008.00px;font-size:12px;color:#000000;transform:scaleX(0.9222);">Unix (LF)</span>
<span style="left:1679.00px;top:1008.00px;font-size:12px;color:#000000;transform:scaleX(0.9047);">Стр 1, стлб 1</span>
<span style="left:1786.50px;top:1008.00px;font-size:12px;color:#000000;transform:scaleX(0.8865);">100%</span>
</div></body></html>
